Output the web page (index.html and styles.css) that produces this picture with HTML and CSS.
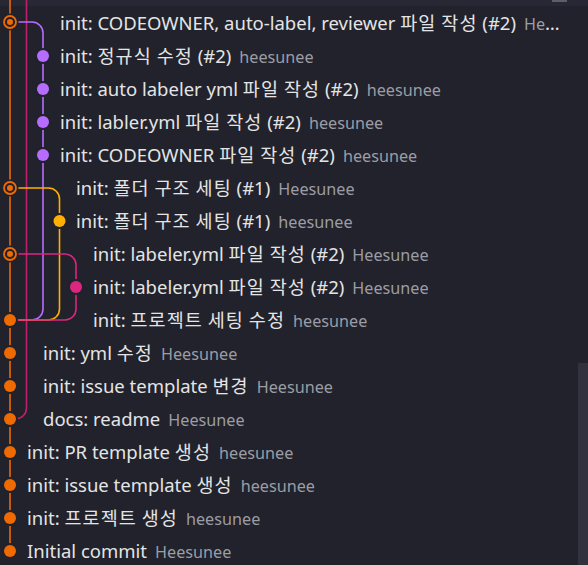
FILE: index.html
```html
<!DOCTYPE html>
<html lang="ko">
<head>
<meta charset="utf-8">
<link rel="stylesheet" href="styles.css">
</head>
<body>
<div class="view">
  <div class="topband"><span class="topthumb"></span></div>
  <div class="list">
    <svg class="graph" width="100" height="565" viewBox="0 0 100 565" xmlns="http://www.w3.org/2000/svg">
      <g fill="none" stroke-width="1.6">
        <path class="l-mag" d="M26.5 0 V408 A11 11 0 0 1 15.5 419 H10"/>
        <path class="l-pur" d="M10 22 H32 A11 11 0 0 1 43 33 V309 A11 11 0 0 1 32 320 H10"/>
        <path class="l-yel" d="M10 188 H48.5 A11 11 0 0 1 59.5 199 V309 A11 11 0 0 1 48.5 320 H10"/>
        <path class="l-pink" d="M10 254 H65 A11 11 0 0 1 76 265 V309 A11 11 0 0 1 65 320 H10"/>
        <path class="l-org" d="M10 0 V551"/>
      </g>
      <g class="dots">
        <circle class="gap" cx="43" cy="56" r="8"/><circle class="f-pur" cx="43" cy="56" r="6"/>
        <circle class="gap" cx="43" cy="89" r="8"/><circle class="f-pur" cx="43" cy="89" r="6"/>
        <circle class="gap" cx="43" cy="122" r="8"/><circle class="f-pur" cx="43" cy="122" r="6"/>
        <circle class="gap" cx="43" cy="155" r="8"/><circle class="f-pur" cx="43" cy="155" r="6"/>
        <circle class="gap" cx="59.5" cy="221" r="8"/><circle class="f-yel" cx="59.5" cy="221" r="6"/>
        <circle class="gap" cx="76" cy="287" r="8"/><circle class="f-pink" cx="76" cy="287" r="6"/>

        <circle class="gap" cx="10" cy="22" r="8.5"/><circle class="ring" cx="10" cy="22" r="6"/><circle class="f-org" cx="10" cy="22" r="3"/>
        <circle class="gap" cx="10" cy="188" r="8.5"/><circle class="ring" cx="10" cy="188" r="6"/><circle class="f-org" cx="10" cy="188" r="3"/>
        <circle class="gap" cx="10" cy="254" r="8.5"/><circle class="ring" cx="10" cy="254" r="6"/><circle class="f-org" cx="10" cy="254" r="3"/>

        <circle class="gap" cx="10" cy="320" r="8"/><circle class="f-org" cx="10" cy="320" r="6"/>
        <circle class="gap" cx="10" cy="353" r="8"/><circle class="f-org" cx="10" cy="353" r="6"/>
        <circle class="gap" cx="10" cy="386" r="8"/><circle class="f-org" cx="10" cy="386" r="6"/>
        <circle class="gap" cx="10" cy="419" r="8"/><circle class="f-org" cx="10" cy="419" r="6"/>
        <circle class="gap" cx="10" cy="452" r="8"/><circle class="f-org" cx="10" cy="452" r="6"/>
        <circle class="gap" cx="10" cy="485" r="8"/><circle class="f-org" cx="10" cy="485" r="6"/>
        <circle class="gap" cx="10" cy="518" r="8"/><circle class="f-org" cx="10" cy="518" r="6"/>
        <circle class="gap" cx="10" cy="551" r="8"/><circle class="f-org" cx="10" cy="551" r="6"/>
      </g>
    </svg>

    <div class="row g3"><span class="msg">init: CODEOWNER, auto-label, reviewer <span class="ko">파일</span> <span class="ko">작성</span> (#2)</span><span class="author">Heesunee</span></div>
    <div class="row g3"><span class="msg">init: <span class="ko">정규식</span> <span class="ko">수정</span> (#2)</span><span class="author">heesunee</span></div>
    <div class="row g3"><span class="msg">init: auto labeler yml <span class="ko">파일</span> <span class="ko">작성</span> (#2)</span><span class="author">heesunee</span></div>
    <div class="row g3"><span class="msg">init: labler.yml <span class="ko">파일</span> <span class="ko">작성</span> (#2)</span><span class="author">heesunee</span></div>
    <div class="row g3"><span class="msg">init: CODEOWNER <span class="ko">파일</span> <span class="ko">작성</span> (#2)</span><span class="author">heesunee</span></div>
    <div class="row g4"><span class="msg">init: <span class="ko">폴더</span> <span class="ko">구조</span> <span class="ko">세팅</span> (#1)</span><span class="author">Heesunee</span></div>
    <div class="row g4"><span class="msg">init: <span class="ko">폴더</span> <span class="ko">구조</span> <span class="ko">세팅</span> (#1)</span><span class="author">heesunee</span></div>
    <div class="row g5"><span class="msg">init: labeler.yml <span class="ko">파일</span> <span class="ko">작성</span> (#2)</span><span class="author">Heesunee</span></div>
    <div class="row g5"><span class="msg">init: labeler.yml <span class="ko">파일</span> <span class="ko">작성</span> (#2)</span><span class="author">Heesunee</span></div>
    <div class="row g5"><span class="msg">init: <span class="ko">프로젝트</span> <span class="ko">세팅</span> <span class="ko">수정</span></span><span class="author">heesunee</span></div>
    <div class="row g2"><span class="msg">init: yml <span class="ko">수정</span></span><span class="author">Heesunee</span></div>
    <div class="row g2"><span class="msg">init: issue template <span class="ko">변경</span></span><span class="author">Heesunee</span></div>
    <div class="row g2"><span class="msg">docs: readme</span><span class="author">Heesunee</span></div>
    <div class="row g1"><span class="msg">init: PR template <span class="ko">생성</span></span><span class="author">heesunee</span></div>
    <div class="row g1"><span class="msg">init: issue template <span class="ko">생성</span></span><span class="author">heesunee</span></div>
    <div class="row g1"><span class="msg">init: <span class="ko">프로젝트</span> <span class="ko">생성</span></span><span class="author">heesunee</span></div>
    <div class="row g1"><span class="msg">Initial commit</span><span class="author">Heesunee</span></div>
  </div>
  <div class="scrollthumb"></div>
</div>
</body>
</html>
```
FILE: styles.css
```css
html, body {
  margin: 0;
  padding: 0;
  background: #21222c;
}
body {
  width: 588px;
  height: 565px;
  overflow: hidden;
  font-family: "Noto Sans", "Noto Sans CJK KR", sans-serif;
  font-size: 18.5px;
  color: #e4e4e4;
}
.view {
  position: relative;
  width: 588px;
  height: 565px;
  overflow: hidden;
}
.topband {
  position: absolute;
  left: 0;
  top: 0;
  width: 588px;
  height: 6px;
  background: #272833;
}
.topthumb {
  position: absolute;
  left: 552px;
  top: 0;
  width: 15px;
  height: 2px;
  background: #5d5e68;
}
.list {
  position: relative;
  padding-top: 5.5px;
  width: 562px;
}
.graph {
  position: absolute;
  left: 0;
  top: 0;
}
.row {
  height: 33px;
  line-height: 33px;
  white-space: nowrap;
  overflow: hidden;
  text-overflow: ellipsis;
  box-sizing: border-box;
}
.g1 { padding-left: 27px; }
.g2 { padding-left: 43px; }
.g3 { padding-left: 60px; }
.g4 { padding-left: 76px; }
.g5 { padding-left: 93px; }
.msg {
  color: #e4e4e4;
}
.ko {
  letter-spacing: 1.1px;
}
.author {
  color: #9c9da4;
  font-size: 16.2px;
  margin-left: 8px;
}
.l-org { stroke: #ef6a00; }
.l-mag { stroke: #c01f6c; }
.l-pur { stroke: #b66dff; }
.l-yel { stroke: #ffb000; }
.l-pink { stroke: #dc267f; }
.gap { fill: #21222c; }
.f-org { fill: #ef6a00; }
.f-pur { fill: #b66dff; }
.f-yel { fill: #ffb000; }
.f-pink { fill: #dc267f; }
.ring { fill: none; stroke: #ef6a00; stroke-width: 1.8; }
.scrollthumb {
  position: absolute;
  right: 0;
  top: 363px;
  width: 10px;
  height: 202px;
  background: #31323d;
}
```
